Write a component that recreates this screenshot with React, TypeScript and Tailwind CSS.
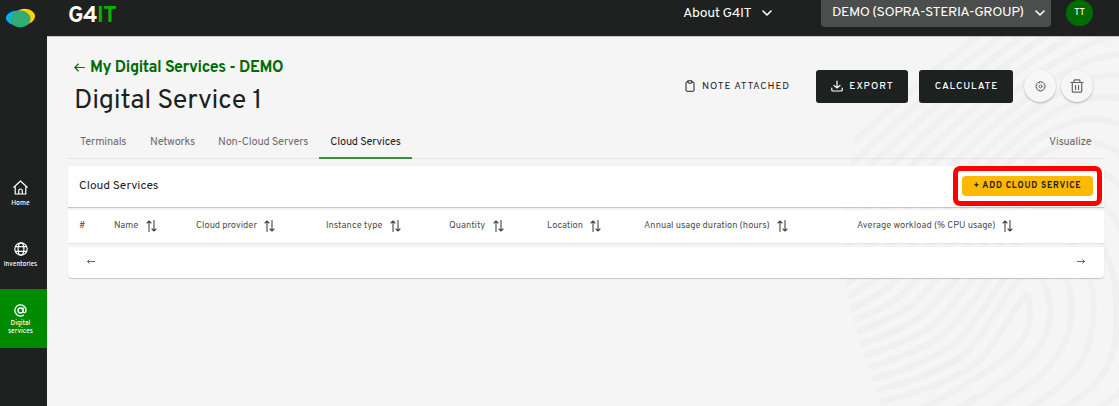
import React from 'react';

const stroke = { fill: 'none', stroke: 'currentColor', strokeLinecap: 'round' as const, strokeLinejoin: 'round' as const };

// One ridge of the fingerprint: left flank, arch, right flank.
function ridge(i: number) {
  const s = [838, 413 - 12.5 * i];
  const m = [977 - 11 * i, 362 - 9.5 * i];
  const t = [1027 + 4 * i + 0.5 * i * i, 294 - 22 * i];
  const r = [1030 + 20 * i + 0.4 * i * i, 315 - 3 * i];
  const b = [921 + 35 * i, 408];
  const k = (t[0] - m[0]) * 0.4;
  const h = (r[0] - t[0]) * 0.55;
  const left = (t[0] - m[0]) * (i === 0 ? 0.12 : 0.3);
  return [
    `M${s[0]} ${s[1]}`,
    `C${s[0] + (m[0] - s[0]) * 0.4} ${s[1] - (s[1] - m[1]) * 0.3} ${m[0] - (m[0] - s[0]) * 0.25} ${m[1] + (m[0] - s[0]) * 0.18}`,
    `${m[0]} ${m[1]}`,
    `C${m[0] + k} ${m[1] - k * 0.95} ${t[0] - left} ${t[1]} ${t[0]} ${t[1]}`,
    `C${t[0] + h} ${t[1]} ${r[0]} ${r[1] - (r[1] - t[1]) * 0.5} ${r[0]} ${r[1]}`,
    `C${r[0]} ${r[1] + 35} ${b[0] + 60} ${b[1] - 32} ${b[0]} ${b[1]}`,
  ].join(' ');
}

const ridges = Array.from({ length: 18 }, (_, i) => i);

function Fingerprint() {
  return (
    <svg className="pointer-events-none absolute top-0 right-0 h-[370px] w-[279px] text-[#f0f0f0]" viewBox="840 36 279 370">
      <defs>
        <clipPath id="print">
          <path d="M883 36H1119V406H881Q848 310 844 270Q840 190 857 130Z" />
        </clipPath>
      </defs>
      <g clipPath="url(#print)" {...stroke} strokeWidth="6.5">
        {ridges.map((i) => (
          <path key={i} d={ridge(i)} />
        ))}
      </g>
    </svg>
  );
}

function SortIcon() {
  return (
    <svg className="h-3 w-[11px] shrink-0 text-[#444]" viewBox="0 0 11 12" {...stroke} strokeWidth="1.1">
      <path d="M3 11.5V1M1 3l2-2 2 2M8 .5V11M6 9l2 2 2-2" />
    </svg>
  );
}

function Chevron() {
  return (
    <svg className="h-[6px] w-[10px] shrink-0" viewBox="0 0 10 6" {...stroke} strokeWidth="1.6">
      <path d="M1 1l4 4 4-4" />
    </svg>
  );
}

const columns = [
  { label: 'Name', cell: 'w-[82px]', text: 'w-[26px]' },
  { label: 'Cloud provider', cell: 'w-[130px]', text: 'w-[62px]' },
  { label: 'Instance type', cell: 'w-[123px]', text: 'w-[58px]' },
  { label: 'Quantity', cell: 'w-[98px]', text: 'w-[38px]' },
  { label: 'Location', cell: 'w-[97px]', text: 'w-[37px]' },
  { label: 'Annual usage duration (hours)', cell: 'w-[213px]', text: 'w-[127px]' },
  { label: 'Average workload (% CPU usage)', cell: 'w-[200px]', text: 'w-[139px]' },
];

export default function App() {
  return (
    <div className="flex h-[406px] w-[1119px] overflow-hidden bg-[#1e211f] font-['Overpass','Roboto',sans-serif] whitespace-nowrap text-[#1d211f]">
      <aside className="flex w-[47px] shrink-0 flex-col text-white">
        <svg className="mt-2 ml-[6px] h-5 w-[30px] shrink-0" viewBox="0 0 30 20">
          <ellipse cx="12" cy="10" rx="12" ry="7.4" fill="#00b0ff" />
          <ellipse cx="18.8" cy="8.5" rx="10.2" ry="7.8" fill="#ffd500" />
          <ellipse cx="14.3" cy="11" rx="10.3" ry="8.4" fill="#2fad74" />
        </svg>
        <a className="mt-[152px] flex h-[28px] flex-col items-center pr-[6px]">
          <svg className="h-[15px] w-[15px] shrink-0" viewBox="0 0 15 15" {...stroke} strokeWidth="1.2">
            <path d="M.8 7.2L7.5 1l6.7 6.2M2.2 6v8h10.6V6M5.7 14v-3.2a1.8 1.8 0 0 1 3.6 0V14" />
          </svg>
          <span className="mt-[5px] text-[7px] leading-[8px] font-medium">Home</span>
        </a>
        <a className="mt-[34px] flex h-[28px] flex-col items-center pr-[6px]">
          <svg className="h-[14px] w-[14px] shrink-0" viewBox="0 0 14 14" {...stroke} strokeWidth="1.2">
            <circle cx="7" cy="7" r="6.2" />
            <ellipse cx="7" cy="7" rx="2.9" ry="6.2" />
            <path d="M1.5 4.7h11M1.5 9.3h11" />
          </svg>
          <span className="mt-[5px] text-[6.6px] leading-[8px] font-medium">Inventories</span>
        </a>
        <a className="mt-[19px] flex h-[59px] w-full flex-col items-center bg-[#008a00] pt-[15px] pr-[6px]">
          <svg className="h-[13px] w-[13px] shrink-0" viewBox="0 0 13 13" {...stroke} strokeWidth="1.3">
            <circle cx="6.5" cy="6.5" r="2.5" />
            <path d="M9 4v3.2c0 2 3.1 2 3.1-.7A5.6 5.6 0 1 0 9.5 11.2" />
          </svg>
          <span className="mt-[3px] text-center text-[6.7px] leading-[8px] font-medium">
            Digital
            <br />
            services
          </span>
        </a>
      </aside>

      <div className="flex w-[1072px] flex-col">
        <header className="flex h-9 shrink-0 items-start text-white">
          <h1 className="ml-[21px] w-[46px] pt-[5px] text-[23px] leading-6 font-bold tracking-[-0.7px]">
            G4<span className="text-[#00b300]">IT</span>
          </h1>
          <div className="ml-[569px] flex h-[25px] items-center">
            <span className="w-[69px] pt-[2px] text-sm tracking-[-0.4px]">About G4IT</span>
            <span className="ml-[10px] flex"><Chevron /></span>
          </div>
          <div className="ml-[49px] flex h-[27px] w-[230px] items-center rounded-b bg-[#4b4e4c] pr-[6px] pb-[2px] pl-[11px]">
            <span className="w-[194px] pt-px text-sm tracking-[-0.45px]">DEMO (SOPRA-STERIA-GROUP)</span>
            <span className="ml-auto flex"><Chevron /></span>
          </div>
          <div className="ml-[15px] flex h-[26px] w-[27px] items-center justify-center rounded-full bg-[#006b00] text-[9px] font-medium">TT</div>
        </header>

        <main className="relative h-[370px] border-t border-[#c4c4c4] bg-[#f5f5f5]">
          <Fingerprint />
          <div className="relative flex flex-col pr-[15px] pl-[21px]">
            <div className="flex h-[85px]">
              <div className="w-[616px] pt-[20px] pl-[6px]">
                <a className="flex h-5 items-center text-base font-bold tracking-[-0.41px] text-[#006b00]">
                  <svg className="mt-px mr-[5px] h-[9px] w-[11px]" viewBox="0 0 11 9" {...stroke} strokeWidth="1.1">
                    <path d="M10.3 4.5H.8M4.3 1L.8 4.5 4.3 8" />
                  </svg>
                  <span className="pt-[2px]">My Digital Services - DEMO</span>
                </a>
                <h2 className="mt-[8px] text-[27px] leading-8 tracking-[-0.2px]">Digital Service 1</h2>
              </div>
              <div className="mt-[32px] flex h-[34px] flex-1 items-center text-[10px] font-medium">
                <svg className="ml-px h-3 w-[10px]" viewBox="0 0 10 12" {...stroke} strokeWidth="1">
                  <path d="M3 2H2q-1 0-1 1v7.3q0 1 1 1h6q1 0 1-1V3q0-1-1-1H7M3 .8h4v1.6q0 .8-.8.8H3.8q-.8 0-.8-.8z" />
                </svg>
                <span className="ml-[7px] w-[114px] font-normal tracking-[0.9px]">NOTE ATTACHED</span>
                <button className="flex h-[33px] w-[92px] items-center justify-center rounded-[3px] bg-[#1d211f] pl-px tracking-[1px] text-white">
                  <svg className="mr-[6px] h-3 w-3" viewBox="0 0 12 12" {...stroke} strokeWidth="1.2">
                    <path d="M6 1v7M3 5.5L6 8l3-2.5M.8 8v2q0 1 1 1h8.4q1 0 1-1V8" />
                  </svg>
                  EXPORT
                </button>
                <button className="ml-[11px] h-[33px] w-[94px] rounded-[3px] bg-[#1d211f] pl-px tracking-[0.9px] text-white">CALCULATE</button>
                <button className="ml-[11px] flex h-8 w-8 items-center justify-center rounded-full bg-[#f6f6f6] text-[#666] shadow-[0_1px_2px_#0004]">
                  <svg className="h-[11px] w-[11px]" viewBox="0 0 11 11" {...stroke} strokeWidth="1">
                    <circle cx="5.5" cy="5.5" r="1.5" />
                    <path d="M4.6.7h1.8l.4 1.1 1.3-.4 1.3 1.3-.5 1.3 1.2.5v1.9l-1.2.4.5 1.3-1.3 1.3-1.3-.5-.4 1.2H4.6l-.4-1.2-1.3.5-1.3-1.3.5-1.3-1.2-.4V4.5L2.1 4l-.5-1.3 1.3-1.3 1.3.4z" />
                  </svg>
                </button>
                <button className="ml-[5px] flex h-8 w-8 items-center justify-center rounded-full bg-[#f6f6f6] text-[#666] shadow-[0_1px_2px_#0004]">
                  <svg className="h-[14px] w-[14px]" viewBox="0 0 14 14" {...stroke} strokeWidth="1.2">
                    <path d="M.8 3.5h12.4M2.3 3.5v8.7q0 1 1 1h7.4q1 0 1-1V3.5M3.7 3.3l.8-2.5h5l.8 2.5M5.5 6.5v4M8.5 6.5v4" />
                  </svg>
                </button>
              </div>
            </div>

            <nav className="flex h-[37px] items-stretch border-b border-[#e4e4e4] text-[11px] tracking-[-0.17px] text-[#6b6b6b]">
              <span className="flex w-[82px] items-center pt-1 pl-[12px]">Terminals</span>
              <span className="flex w-[68px] items-center pt-1">Networks</span>
              <span className="flex w-[101px] items-center pt-1">Non-Cloud Servers</span>
              <span className="-mb-px flex w-[93px] items-center justify-center border-b-2 border-[#3b8c3b] pt-[5px] text-[#1d211f]">Cloud Services</span>
              <span className="ml-auto flex w-[55px] items-center pt-1">Visualize</span>
            </nav>

            <section className="mt-[7px] flex h-[41px] items-start rounded-t bg-white pr-0.5 pl-[11px] shadow-[0_1px_1px_#0003]">
              <h3 className="pt-[11px] text-xs leading-[18px]">Cloud Services</h3>
              <div className="ml-auto flex h-[40px] w-[149px] items-center justify-center rounded-[7px] border-[5px] border-[#ff0000]">
                <button className="h-5 w-[131px] rounded-sm bg-[#ffb900] text-[8.5px] font-bold tracking-[0.8px]">+ ADD CLOUD SERVICE</button>
              </div>
            </section>
            <div className="mt-[3px] flex h-[33px] items-center bg-white pb-px pl-[11px] text-[9.3px] text-[#505050] shadow-[0_1px_1px_#0001]">
              <span className="w-[35px] pt-[2px]">#</span>
              {columns.map((c) => (
                <span key={c.label} className={`flex items-center gap-[6px] ${c.cell}`}>
                  <span className={`pt-[2px] ${c.text}`}>{c.label}</span>
                  <SortIcon />
                </span>
              ))}
            </div>
            <div className="mt-1 flex h-[31px] items-center justify-between rounded-b bg-white px-[19px] pb-[3px] text-[#666] shadow-[0_1px_1px_#0003]">
              <svg className="h-[5px] w-2" viewBox="0 0 8 5" {...stroke} strokeWidth="1"><path d="M7.5 2.5h-7M2.3.7L.5 2.5l1.8 1.8" /></svg>
              <svg className="h-[5px] w-2" viewBox="0 0 8 5" {...stroke} strokeWidth="1"><path d="M.5 2.5h7M5.7.7l1.8 1.8-1.8 1.8" /></svg>
            </div>
          </div>
        </main>
      </div>
    </div>
  );
}
